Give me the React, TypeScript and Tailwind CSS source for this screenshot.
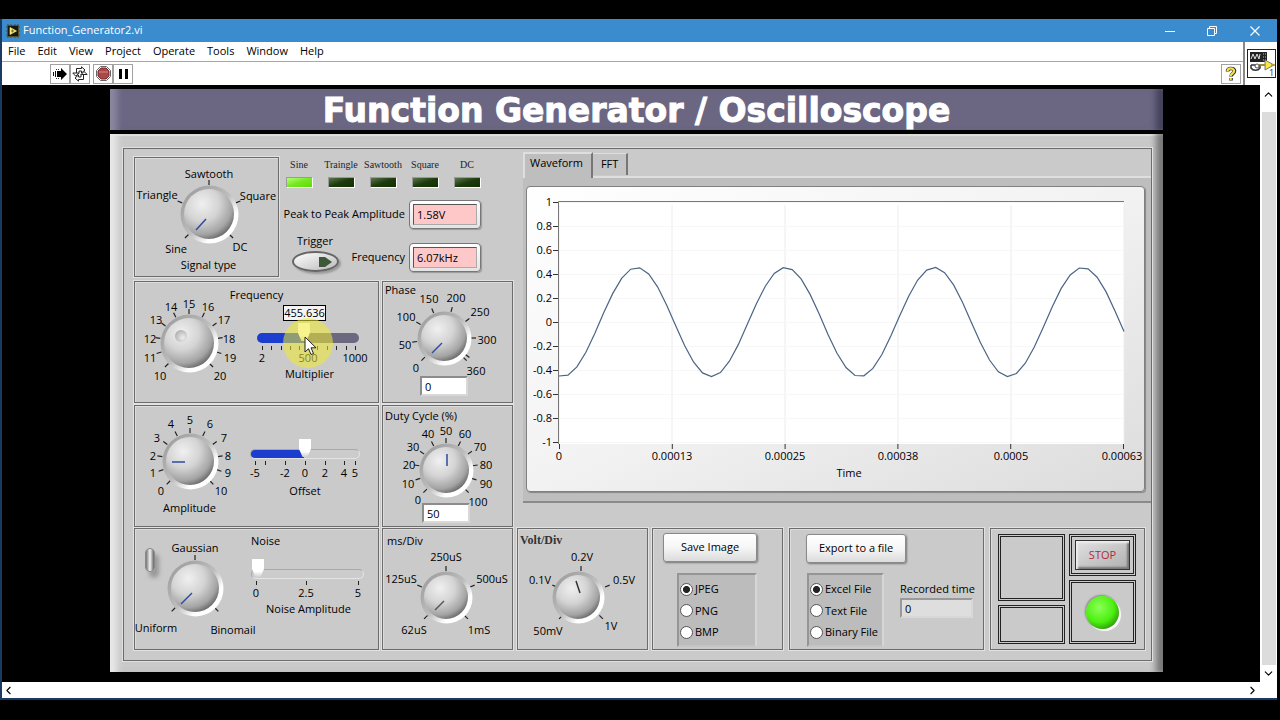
import { ReactNode } from "react";
import { ChevronDown, ChevronLeft, ChevronRight, ChevronUp } from "lucide-react";

type DialLabel = [text: string, x: number, y: number];

interface DialProps {
  name: string;
  radius: number;
  width: number;
  height: number;
  left: number;
  top: number;
  labels: DialLabel[];
  ticks?: number[];
  scaleX?: number;
  needle?: [number, number, number, number];
  needleColor?: string;
}

// Coordinates are relative to the centre of the knob.
function Dial({
  name,
  radius,
  width,
  height,
  left,
  top,
  labels,
  ticks,
  scaleX = 0,
  needle,
  needleColor = "#2d4ba0",
}: DialProps) {
  const marks = ticks ?? labels.map((_, i) => i / (labels.length - 1));

  return (
    <svg
      width={width}
      height={height}
      viewBox={`${-left} ${-top} ${width} ${height}`}
      className="shrink-0 overflow-visible"
      role="img"
      aria-label={name}
    >
      <defs>
        <linearGradient id="ring" x1="0" y1="0" x2="1" y2="1">
          <stop offset="0.1" stopColor="#9e9e9e" />
          <stop offset="0.5" stopColor="#bdbdbd" />
          <stop offset="0.72" stopColor="#ffffff" />
        </linearGradient>
        <radialGradient id="cap" cx="0.36" cy="0.3" r="0.76">
          <stop offset="0" stopColor="#f0f0f0" />
          <stop offset="0.45" stopColor="#d4d4d4" />
          <stop offset="0.8" stopColor="#a4a4a4" />
          <stop offset="1" stopColor="#626262" />
        </radialGradient>
        <radialGradient id="dimple" cx="0.65" cy="0.65" r="0.7">
          <stop offset="0" stopColor="#eeeeee" />
          <stop offset="1" stopColor="#b0b0b0" />
        </radialGradient>
      </defs>
      {marks.map((m) => {
        const a = ((-135 + 270 * m) * Math.PI) / 180;
        return (
          <line
            key={m}
            x1={scaleX + Math.sin(a) * (radius + 4)}
            y1={-Math.cos(a) * (radius + 4)}
            x2={scaleX + Math.sin(a) * (radius + 9)}
            y2={-Math.cos(a) * (radius + 9)}
            stroke="#222"
            strokeWidth="1.2"
          />
        );
      })}
      <circle cx="0.5" cy="0.5" r={radius + 4} fill="url(#ring)" />
      <circle r={radius} fill="url(#cap)" />
      {needle ? (
        <line
          x1={needle[0]}
          y1={needle[1]}
          x2={needle[2]}
          y2={needle[3]}
          stroke={needleColor}
          strokeWidth="1.5"
        />
      ) : (
        <circle cx="-8" cy="-7" r="6" fill="url(#dimple)" />
      )}
      {labels.map(([text, x, y]) => (
        <text key={text} x={x} y={y + 4} textAnchor="middle" className="fill-black text-[11px]">
          {text}
        </text>
      ))}
    </svg>
  );
}

interface ScaleProps {
  width: number;
  ticks: number[];
  labels: [string, number][];
}

function Scale({ width, ticks, labels }: ScaleProps) {
  return (
    <svg width={width} height="20" viewBox={`0 0 ${width} 20`} className="block overflow-visible" aria-hidden="true">
      {ticks.map((x) => (
        <line key={x} x1={x + 0.5} y1="0" x2={x + 0.5} y2="4" stroke="#222" strokeWidth="1" />
      ))}
      {labels.map(([text, x]) => (
        <text key={text} x={x} y="16" textAnchor="middle" className="fill-black text-[11px]">
          {text}
        </text>
      ))}
    </svg>
  );
}

const sliderBase =
  "block h-[10px] appearance-none rounded-full [&::-webkit-slider-thumb]:-mt-3 [&::-webkit-slider-thumb]:h-[18px] [&::-webkit-slider-thumb]:w-3 [&::-webkit-slider-thumb]:appearance-none [&::-webkit-slider-thumb]:bg-linear-to-b [&::-webkit-slider-thumb]:from-white [&::-webkit-slider-thumb]:from-70% [&::-webkit-slider-thumb]:to-[#d0d0d0] [&::-webkit-slider-thumb]:[clip-path:polygon(0_0,100%_0,100%_55%,70%_100%,30%_100%,0_55%)]";

function Group({ className = "", children }: { className?: string; children: ReactNode }) {
  return (
    <div className={`border border-[#6c6c6c] shadow-[0_0_0_1px_#e2e2e2,inset_1px_1px_0_#dcdcdc] ${className}`}>
      {children}
    </div>
  );
}

function Led({ label, on = false }: { label: string; on?: boolean }) {
  return (
    <div className="flex w-[42px] flex-col items-center gap-[6px]">
      <span className="font-['Liberation_Serif',serif] text-[10px] leading-3 text-[#222]">{label}</span>
      <span
        className={`h-[11px] w-[27px] border border-t-[#9a9a9a] border-r-white border-b-white border-l-[#9a9a9a] ${
          on
            ? "bg-linear-to-br from-[#b4ff6a] via-[#74e81c] to-[#5fd80c]"
            : "bg-linear-to-br from-[#5c7a4c] via-[#1c3a0c] to-[#143004]"
        }`}
      />
    </div>
  );
}

function Readout({ label, value }: { label: string; value: string }) {
  return (
    <label className="flex items-center gap-1">
      <span className="whitespace-nowrap">{label}</span>
      <span className="rounded-[4px] border border-[#777] bg-linear-to-b from-white to-[#e4e4e4] p-[3px] shadow-[1px_1px_1px_#999]">
        <input
          readOnly
          value={value}
          className="block h-[21px] w-16 border border-t-[#555] border-r-[#aaa] border-b-[#aaa] border-l-[#555] bg-[#ffc8c8] px-[3px] text-[11px]"
        />
      </span>
    </label>
  );
}

function NumberField({ label, value }: { label: string; value: string }) {
  return (
    <input
      aria-label={label}
      defaultValue={value}
      className="block h-5 w-12 border-2 border-t-[#8c8c8c] border-r-[#d8d8d8] border-b-[#d8d8d8] border-l-[#8c8c8c] bg-white px-[3px] text-[11px]"
    />
  );
}

function RadioList({ name, options, className }: { name: string; options: string[]; className: string }) {
  return (
    <div
      role="radiogroup"
      aria-label={name}
      className={`flex h-[74px] flex-col justify-between border-2 border-t-[#959595] border-r-[#d6d6d6] border-b-[#c4c4c4] border-l-[#959595] bg-[#bcbcbc] pt-1 pb-[3px] pl-px ${className}`}
    >
      {options.map((option, i) => (
        <label key={option} className="flex items-center gap-[2px] leading-5 whitespace-nowrap">
          <input
            type="radio"
            name={name}
            defaultChecked={i === 0}
            className="size-[13px] appearance-none rounded-full border border-[#555] bg-white checked:bg-[radial-gradient(circle,#222_40%,#fff_50%)]"
          />
          {option}
        </label>
      ))}
    </div>
  );
}

function PushButton({ children }: { children: ReactNode }) {
  return (
    <button
      type="button"
      className="h-[29px] rounded-[3px] border border-[#8a8a8a] bg-linear-to-b from-white via-[#f6f6f6] to-[#dcdcdc] px-3 whitespace-nowrap shadow-[1px_1px_2px_#777]"
    >
      {children}
    </button>
  );
}

const samples = Array.from({ length: 64 }, (_, i) => {
  const x = 32 + (i * 565) / 63;
  const y = 135 + 54.6 * Math.cos((2 * Math.PI * (x - 35.6)) / 148.6);
  return `${x.toFixed(1)},${y.toFixed(1)}`;
}).join(" ");

const yAxis = ["1", "0.8", "0.6", "0.4", "0.2", "0", "-0.2", "-0.4", "-0.6", "-0.8", "-1"];
const xAxis = ["0", "0.00013", "0.00025", "0.00038", "0.0005", "0.00063"];

function WaveformGraph() {
  return (
    <svg viewBox="0 0 617 304" className="block w-full" role="img" aria-label="Waveform">
      <rect x="32" y="15" width="565" height="242" fill="#fff" />
      {xAxis.map((text, i) => (
        <g key={text}>
          <line x1={32 + i * 113} y1="18" x2={32 + i * 113} y2="257" stroke="#ececec" />
          <line x1={32.5 + i * 112.8} y1="257" x2={32.5 + i * 112.8} y2="262" stroke="#333" />
          <text x={32 + i * 113 - (i === 5 ? 2 : 0)} y="273" textAnchor="middle" className="fill-black text-[11px]">
            {text}
          </text>
        </g>
      ))}
      {yAxis.map((text, i) => (
        <g key={text}>
          <line x1="33" y1={15.5 + i * 24} x2="597" y2={15.5 + i * 24} stroke="#f7f7f7" />
          <line x1="26" y1={15.5 + i * 24} x2="31" y2={15.5 + i * 24} stroke="#333" />
          <text x="25" y={19 + i * 24} textAnchor="end" className="fill-black text-[11px]">
            {text}
          </text>
        </g>
      ))}
      <path d="M31.5 257V14.5H597" fill="none" stroke="#777" />
      <polyline points={samples} fill="none" stroke="#4a6484" strokeWidth="1.2" />
      <text x="322" y="290" textAnchor="middle" className="fill-black text-[11px]">
        Time
      </text>
    </svg>
  );
}

function AppIcon() {
  return (
    <svg width="14" height="14" viewBox="0 0 14 14" aria-hidden="true">
      <path d="M2 0v14M5 0v14M9 0v14M12 0v14M0 3h14M0 7h14M0 11h14" stroke="#4d4630" />
      <rect x="1.5" y="1.5" width="11" height="11" fill="#171711" stroke="#55502f" />
      <path d="M4 3.5 10.5 7 4 10.5Z" fill="#f4e34a" stroke="#fffbc0" strokeWidth="0.6" />
      <path d="M5 7h3M6.500 5.500v3" stroke="#6b6420" strokeWidth="0.8" />
    </svg>
  );
}

function TitleBar() {
  return (
    <div className="flex h-[23px] items-center bg-[#3a8ccf] pl-1 text-white">
      <AppIcon />
      <span className="ml-[3px]">Function_Generator2.vi</span>
      <div className="ml-auto flex">
        <button type="button" aria-label="Minimize" className="flex h-[23px] w-[42px] items-center justify-center">
          <svg width="10" height="10" stroke="#fff">
            <path d="M0 5.5h10" />
          </svg>
        </button>
        <button type="button" aria-label="Restore" className="flex h-[23px] w-[42px] items-center justify-center">
          <svg width="10" height="10" fill="none" stroke="#fff">
            <path d="M.5 2.5h7v7h-7ZM2.5 2.5v-2h7v7h-2" />
          </svg>
        </button>
        <button type="button" aria-label="Close" className="flex h-[23px] w-11 items-center justify-center">
          <svg width="10" height="10" fill="none" stroke="#fff" strokeWidth="1.2">
            <path d="m.5.5 9 9M9.5.5l-9 9" />
          </svg>
        </button>
      </div>
    </div>
  );
}

const toolButton = "flex h-5 w-5 items-center justify-center border border-[#a2a2a2] bg-white";

function Toolbar() {
  return (
    <div className="flex h-6 items-center border-t border-[#a8a8a8] pr-[2px] pl-12">
      <button type="button" aria-label="Run" className={toolButton}>
        <svg width="16" height="14" viewBox="0 0 16 14">
          <path d="M1.5 5v4M3.5 4v6" stroke="#111" strokeWidth="1" />
          <path d="M5 4h4V1l6 6-6 6v-3H5Z" fill="#000" />
          <path d="M4 2.5h4M4 11.5h4" stroke="#333" strokeDasharray="1 1" />
        </svg>
      </button>
      <button type="button" aria-label="Run continuously" className={toolButton}>
        <svg width="16" height="16" viewBox="0 0 16 16" fill="#fff" stroke="#222" strokeWidth="1">
          <path d="M4.500 7.500v-5h5V.8L13 4 9.500 7V5h-2.500v2.500" />
          <path d="M11.500 8v5.500h-5v1.700L3 12l3.500-3v2h2.500V8" />
          <path d="M.8 7h6L3.800 10.200ZM15.200 8.500h-6L12 5.500Z" />
        </svg>
      </button>
      <button type="button" aria-label="Abort" className={`ml-[3px] ${toolButton}`}>
        <svg width="15" height="15" viewBox="0 0 15 15">
          <path d="M4.500.5h6l4 4v6l-4 4h-6l-4-4v-6Z" fill="#fff" stroke="#666" />
          <path d="M5 2h5l3 3v5l-3 3H5l-3-3V5Z" fill="#a84848" stroke="#7b2b2b" />
          <path d="M3 6h9" stroke="#d88" />
        </svg>
      </button>
      <button type="button" aria-label="Pause" className={toolButton}>
        <svg width="9" height="10">
          <path d="M0 0h3v10H0ZM6 0h3v10H6Z" />
        </svg>
      </button>
      <button type="button" aria-label="Help" className={`ml-auto ${toolButton}`}>
        <svg width="12" height="16" viewBox="0 0 12 16" fill="none">
          <path d="M2.500 5.500C2.500 1.500 9.500 1.500 9.500 5c0 2.500-3.500 2.500-3.500 5.500M6 12v2.500" stroke="#222" strokeWidth="3.600" />
          <path d="M2.500 5.200C2.500 1.500 9.200 1.500 9.200 5c0 2.500-3.500 2.500-3.500 5M5.700 12v2" stroke="#f2e24a" strokeWidth="2.200" />
        </svg>
      </button>
    </div>
  );
}

function ViIcon() {
  return (
    <svg width="29" height="29" viewBox="0 0 29 29" role="img" aria-label="VI icon">
      <rect x="0.500" y="0.500" width="28" height="28" fill="#fff" stroke="#222" />
      <rect x="3" y="3" width="17" height="10" fill="#222" />
      <path d="M4 10l2-5 2 5 2-5 2 5 1-5" fill="none" stroke="#ddd" />
      <path d="M16 5h3M16 8h3M16 11h3" stroke="#bbb" strokeDasharray="1 1" />
      <path d="M4 16h5M4 16v3c2 3 7 3 9 0v-3h5" fill="none" stroke="#333" strokeWidth="1.500" />
      <circle cx="10" cy="17" r="2" fill="#fff" stroke="#555" />
      <path d="M18 11l9 5-9 5Z" fill="#f5e942" stroke="#777" />
      <path d="M13 16h6M24 16h4" stroke="#b99a20" strokeWidth="1.500" />
      <text x="22" y="27" className="fill-[#333] text-[9px]">
        1
      </text>
    </svg>
  );
}

const menus = ["File", "Edit", "View", "Project", "Operate", "Tools", "Window", "Help"];

function SignalRow() {
  return (
    <div className="flex h-[120px]">
      <Group className="flex w-[145px] flex-col items-center">
        <Dial
          name="Signal type"
          radius={25}
          width={143}
          height={99}
          left={74}
          top={56}
          needle={[-13, 16, -3, 5]}
          labels={[
            ["Sine", -33, 35],
            ["Triangle", -52, -19],
            ["Sawtooth", 0, -40],
            ["Square", 49, -18],
            ["DC", 31, 33],
          ]}
        />
        <span className="pl-1 leading-4">Signal type</span>
      </Group>
      <div className="flex flex-1 flex-col pt-[2px]">
        <div className="-ml-px flex">
          <Led label="Sine" on />
          <Led label="Traingle" />
          <Led label="Sawtooth" />
          <Led label="Square" />
          <Led label="DC" />
        </div>
        <div className="mt-3 flex w-[202px] justify-end">
          <Readout label="Peak to Peak Amplitude" value="1.58V" />
        </div>
        <div className="mt-1 flex w-[202px] items-end justify-between pl-3">
          <div className="flex w-12 flex-col items-center">
            <span id="trigger" className="leading-4">
              Trigger
            </span>
            <button
              type="button"
              aria-labelledby="trigger"
              className="mt-[2px] flex h-[21px] w-[47px] items-center justify-end rounded-[50%] border-2 border-[#666] bg-linear-to-br from-white to-[#bbb] pr-[5px] shadow-[2px_2px_2px_#999]"
            >
              <svg width="13" height="10">
                <path d="M0 0h6l7 5-7 5H0Z" fill="#3c5838" />
              </svg>
            </button>
          </div>
          <Readout label="Frequency" value="6.07kHz" />
        </div>
      </div>
    </div>
  );
}

function FrequencyGroup() {
  return (
    <Group className="flex h-[122px] w-[245px] flex-col pt-[7px]">
      <div className="text-center leading-3">Frequency</div>
      <div className="flex">
        <Dial
          name="Frequency"
          radius={25}
          width={105}
          height={84}
          left={54}
          top={42}
          labels={[
            ["10", -29, 33],
            ["11", -39, 15],
            ["12", -39, -4],
            ["13", -33, -23],
            ["14", -18, -36],
            ["15", 0, -39],
            ["16", 19, -36],
            ["17", 35, -23],
            ["18", 40, -4],
            ["19", 41, 15],
            ["20", 31, 33],
          ]}
        />
        <div className="relative ml-[17px] w-[105px] pt-1">
          <output className="ml-[26px] block h-4 w-[43px] border border-black bg-[#f4f4f4] text-center leading-[14px]">
            455.636
          </output>
          <input
            id="multiplier"
            type="range"
            min="2"
            max="1000"
            step="0.001"
            defaultValue="455.636"
            className={`mt-3 w-[102px] bg-[linear-gradient(to_right,#1c3ecf_46%,#6b6880_46%)] ${sliderBase}`}
          />
          <div className="mt-[3px]">
            <Scale
              width={102}
              ticks={[5, 14, 24, 33, 42, 51, 60, 70, 79, 89, 98]}
              labels={[
                ["2", 5],
                ["500", 51],
                ["1000", 98],
              ]}
            />
          </div>
          <label htmlFor="multiplier" className="mt-[2px] block text-center leading-3">
            Multiplier
          </label>
          <span className="absolute top-[17px] left-[26px] size-[50px] rounded-full bg-[#f0ea30]/55" />
          <svg className="absolute top-[35px] left-[47px]" width="13" height="20" viewBox="0 0 13 20" aria-hidden="true">
            <path d="M1 1v15l3.500-3.300L7 18.500l2.500-1-2.500-5.700h5Z" fill="#fff" stroke="#222" />
          </svg>
        </div>
      </div>
    </Group>
  );
}

function PhaseGroup() {
  return (
    <Group className="flex h-[122px] w-[131px] flex-col pt-[2px] pl-[2px]">
      <span className="leading-3">Phase</span>
      <Dial
        name="Phase"
        radius={23}
        width={120}
        height={80}
        left={59}
        top={42}
        ticks={[0, 50, 100, 150, 200, 250, 300, 350, 360].map((v) => v / 360)}
        needle={[-12, 15, -2, 5]}
        labels={[
          ["0", -28, 30],
          ["50", -39, 7],
          ["100", -38, -21],
          ["150", -15, -39],
          ["200", 12, -40],
          ["250", 36, -26],
          ["300", 43, 2],
          ["360", 32, 33],
        ]}
      />
      <div className="ml-[35px]">
        <NumberField label="Phase" value="0" />
      </div>
    </Group>
  );
}

function AmplitudeGroup() {
  return (
    <Group className="flex h-[122px] w-[245px] pt-[6px]">
      <div className="flex w-[109px] flex-col items-center">
        <Dial
          name="Amplitude"
          radius={24}
          width={109}
          height={90}
          left={55}
          top={49}
          needle={[-18, 1, -5, 1]}
          labels={[
            ["0", -29, 30],
            ["1", -37, 12],
            ["2", -37, -5],
            ["3", -33, -23],
            ["4", -19, -37],
            ["5", 0, -41],
            ["6", 20, -37],
            ["7", 34, -23],
            ["8", 38, -5],
            ["9", 38, 12],
            ["10", 31, 30],
          ]}
        />
        <span className="leading-3">Amplitude</span>
      </div>
      <div className="ml-[6px] w-[110px] pt-[37px]">
        <input
          id="offset"
          type="range"
          min="-5"
          max="5"
          defaultValue="0"
          className={`w-[110px] border border-t-[#a8a8a8] border-r-[#e4e4e4] border-b-[#e4e4e4] border-l-[#a8a8a8] bg-[linear-gradient(to_right,#1c3ecf_49%,#cccccc_49%)] ${sliderBase}`}
        />
        <div className="mt-[2px]">
          <Scale
            width={110}
            ticks={[5, 15, 35, 55, 75, 94, 105]}
            labels={[
              ["-5", 5],
              ["-2", 35],
              ["0", 55],
              ["2", 75],
              ["4", 94],
              ["5", 105],
            ]}
          />
        </div>
        <label htmlFor="offset" className="mt-1 block text-center leading-3">
          Offset
        </label>
      </div>
    </Group>
  );
}

function DutyCycleGroup() {
  return (
    <Group className="flex h-[122px] w-[131px] flex-col pt-1 pl-[2px]">
      <span className="leading-3">Duty Cycle (%)</span>
      <Dial
        name="Duty Cycle"
        radius={23}
        width={120}
        height={81}
        left={61}
        top={48}
        needle={[1, -16, 1, -4]}
        labels={[
          ["0", -28, 30],
          ["10", -38, 14],
          ["20", -37, -5],
          ["30", -33, -23],
          ["40", -18, -36],
          ["50", 0, -39],
          ["60", 19, -36],
          ["70", 34, -23],
          ["80", 40, -5],
          ["90", 40, 14],
          ["100", 32, 32],
        ]}
      />
      <div className="ml-[37px]">
        <NumberField label="Duty Cycle (%)" value="50" />
      </div>
    </Group>
  );
}

function NoiseGroup() {
  return (
    <Group className="flex w-[245px] shrink-0">
      <div className="relative">
        <Dial
          name="Noise type"
          radius={24}
          width={120}
          height={115}
          left={60}
          top={59}
          ticks={[0, 0.5, 1]}
          needle={[-14, 16, -3, 5]}
          labels={[
            ["Uniform", -39, 40],
            ["Gaussian", 0, -40],
            ["Binomail", 38, 42],
          ]}
        />
        <button
          type="button"
          aria-label="Noise on"
          className="absolute top-[19px] left-[10px] h-6 w-[10px] rounded-full border border-[#888] bg-linear-to-r from-[#777] via-[#f4f4f4] to-[#666] shadow-[4px_6px_4px_#999]"
        />
      </div>
      <div className="-ml-1 w-[115px] pt-1">
        <div className="leading-4">Noise</div>
        <input
          id="noise"
          type="range"
          min="0"
          max="5"
          defaultValue="0"
          className={`mt-[20px] w-[113px] border border-t-[#a8a8a8] border-r-[#e4e4e4] border-b-[#e4e4e4] border-l-[#a8a8a8] bg-[#cccccc] ${sliderBase}`}
        />
        <div className="mt-[2px]">
          <Scale
            width={113}
            ticks={[5, 55, 107]}
            labels={[
              ["0", 5],
              ["2.5", 55],
              ["5", 107],
            ]}
          />
        </div>
        <label htmlFor="noise" className="block text-center leading-4 whitespace-nowrap">
          Noise Amplitude
        </label>
      </div>
    </Group>
  );
}

function BottomRow() {
  return (
    <div className="mt-px mr-[6px] flex h-[122px]">
      <NoiseGroup />
      <Group className="ml-[3px] w-[131px] shrink-0 pt-1 pl-1">
        <div className="leading-4">ms/Div</div>
        <Dial
          name="ms/Div"
          radius={22}
          width={122}
          height={90}
          left={59}
          top={48}
          needle={[-11, 13, -2, 4]}
          needleColor="#555"
          labels={[
            ["62uS", -32, 33],
            ["125uS", -45, -18],
            ["250uS", 0, -40],
            ["500uS", 46, -18],
            ["1mS", 33, 33],
          ]}
        />
      </Group>
      <Group className="ml-1 w-[131px] shrink-0 pt-[3px] pl-[2px]">
        <div className="font-['Liberation_Serif',serif] text-xs leading-4 font-bold text-[#333]">Volt/Div</div>
        <Dial
          name="Volt/Div"
          radius={22}
          width={122}
          height={90}
          left={58}
          top={49}
          scaleX={3}
          needle={[-2, -16, 2, -4]}
          needleColor="#333"
          labels={[
            ["50mV", -30, 34],
            ["0.1V", -38, -17],
            ["0.2V", 4, -40],
            ["0.5V", 46, -17],
            ["1V", 33, 29],
          ]}
        />
      </Group>
      <Group className="ml-1 flex w-[131px] shrink-0 flex-col pt-1 pl-[10px]">
        <div className="flex *:w-[94px]">
          <PushButton>Save Image</PushButton>
        </div>
        <RadioList name="Image format" options={["JPEG", "PNG", "BMP"]} className="mt-[11px] ml-[14px] w-20" />
      </Group>
      <Group className="ml-[6px] min-w-[195px] flex-1 pt-[5px] pl-4">
        <PushButton>Export to a file</PushButton>
        <div className="mt-[10px] flex">
          <RadioList
            name="File format"
            options={["Excel File", "Text File", "Binary File"]}
            className="ml-px w-[77px]"
          />
          <label className="ml-4 pt-2">
            <span className="block leading-4 whitespace-nowrap">Recorded time</span>
            <input
              readOnly
              value="0"
              className="mt-px block h-5 w-[73px] border-2 border-t-[#999] border-r-[#d8d8d8] border-b-[#d8d8d8] border-l-[#999] bg-[#dedede] px-[3px] text-[11px]"
            />
          </label>
        </div>
      </Group>
      <Group className="ml-[6px] flex w-[155px] shrink-0 gap-1 py-[5px] pr-[8px] pl-[7px]">
        <div className="flex flex-1 flex-col gap-1">
          <div className="h-[67px] border-3 border-double border-[#222] bg-[#cacaca]" />
          <div className="flex-1 border-3 border-double border-[#222] bg-[#cacaca]" />
        </div>
        <div className="flex flex-1 flex-col gap-1">
          <div className="h-[42px] border-3 border-double border-[#222] p-[3px]">
            <button
              type="button"
              className="block h-full w-full border border-[#333] bg-linear-to-br from-[#e2e2e2] via-[#c8c8c8] to-[#b0b0b0] text-[#b02c38] shadow-[inset_2px_2px_2px_#eee,inset_-2px_-2px_2px_#777]"
            >
              STOP
            </button>
          </div>
          <div className="flex flex-1 items-center justify-center border-3 border-double border-[#222]">
            <span className="size-[33px] rounded-full bg-[radial-gradient(circle_at_40%_35%,#8cff58_0%,#4cf010_50%,#2c9808_80%)] shadow-[2px_2px_1px_#fff,-1px_-1px_2px_#888]" />
          </div>
        </div>
      </Group>
    </div>
  );
}

function GraphTabs() {
  return (
    <div className="ml-[10px] flex h-[351px] min-w-0 flex-1 flex-col border-b-2 border-[#8a8a8a] bg-[#bebebe]">
      <div role="tablist" className="flex bg-[#cacaca]">
        <button
          type="button"
          role="tab"
          aria-selected="true"
          className="h-[26px] border-t-2 border-r-2 border-l-2 border-t-[#dedede] border-r-[#777] border-l-[#dedede] bg-[#bebebe] pr-2 pb-[6px] pl-[5px]"
        >
          Waveform
        </button>
        <div className="flex flex-1 items-start border-b-2 border-[#dedede]">
          <button
            type="button"
            role="tab"
            aria-selected="false"
            className="mt-[1px] h-[22px] border-t border-r-2 border-t-[#dedede] border-r-[#777] bg-[#c4c4c4] px-2"
          >
            FFT
          </button>
        </div>
      </div>
      <div className="mt-2 mr-[6px] ml-[3px] rounded-[4px] border border-[#808080] bg-linear-to-br from-white via-[#f2f2f2] to-[#dcdcdc] shadow-[1px_1px_1px_#888]">
        <WaveformGraph />
      </div>
    </div>
  );
}

export default function App() {
  return (
    <div className="flex min-h-screen flex-col bg-black pt-[19px] pr-[3px] pb-5 font-['Open_Sans','Noto_Sans',sans-serif] text-[11px] text-black">
      <div className="flex flex-1 flex-col border-b-2 border-l-2 border-[#1b3a63]">
        <TitleBar />
        <div className="flex bg-white">
          <div className="flex-1">
            <nav className="flex h-[19px] items-center gap-3 pl-[6px]">
              {menus.map((menu) => (
                <button key={menu} type="button">
                  {menu}
                </button>
              ))}
            </nav>
            <Toolbar />
          </div>
          <div className="flex w-[34px] items-center justify-center border-l-2 border-[#888]">
            <ViIcon />
          </div>
        </div>

        <div className="flex flex-1">
          <main className="flex-1 bg-black pt-1 pr-[97px] pb-[10px] pl-[108px]">
            <h1 className="h-[41px] bg-[#6b6783] text-center font-['DejaVu_Sans',sans-serif] text-[33px] leading-[43px] font-bold whitespace-nowrap text-white shadow-[inset_10px_0_6px_-3px_#8b87a0,inset_-10px_0_6px_-3px_#44415a] [-webkit-text-stroke:1px_white]">
              Function Generator / Oscilloscope
            </h1>
            <div className="mt-1 bg-[#c9c9c9] pt-[14px] pr-[11px] pb-[11px] pl-[13px] shadow-[inset_10px_0_6px_-3px_#e8e8e8,inset_-10px_0_6px_-3px_#777,inset_0_2px_1px_#e8e8e8]">
              <div className="border border-[#6c6c6c] bg-[#cacaca] pt-[3px] pb-[10px] pl-[10px] shadow-[0_0_0_1px_#e0e0e0]">
                <div className="flex">
                  <div className="w-[379px] shrink-0 pt-[5px]">
                    <SignalRow />
                    <div className="mt-1 flex gap-[3px]">
                      <FrequencyGroup />
                      <PhaseGroup />
                    </div>
                    <div className="mt-[2px] flex gap-[3px]">
                      <AmplitudeGroup />
                      <DutyCycleGroup />
                    </div>
                  </div>
                  <GraphTabs />
                </div>
                <BottomRow />
              </div>
            </div>
          </main>
          <div className="flex w-[17px] shrink-0 flex-col items-center bg-white">
            <button type="button" aria-label="Scroll up" className="flex h-[27px] items-start pt-[3px]">
              <ChevronUp size={13} />
            </button>
            <div className="w-[14px] flex-1 bg-[#dcdcdc]" />
            <button type="button" aria-label="Scroll down" className="flex h-[17px] items-center">
              <ChevronDown size={13} />
            </button>
          </div>
        </div>
        <div className="flex h-4 items-center justify-between bg-white pr-[18px]">
          <button type="button" aria-label="Scroll left">
            <ChevronLeft size={13} />
          </button>
          <button type="button" aria-label="Scroll right">
            <ChevronRight size={13} />
          </button>
        </div>
      </div>
    </div>
  );
}
